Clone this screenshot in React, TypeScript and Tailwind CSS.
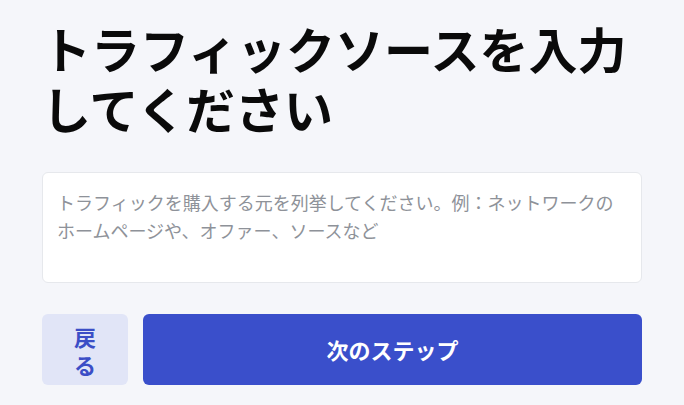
import React, { useState } from 'react';

export default function App() {
  const [source, setSource] = useState('');

  return (
    <div className="min-h-screen bg-[#f5f6fa] font-['Noto_Sans_CJK_JP','Noto_Sans',sans-serif]">
      <div className="mx-auto max-w-[600px] pt-[18px]">
        {/* Title */}
        <h1 className="text-[49px] font-bold leading-[60px] text-[#0a0a0a]">
          トラフィックソースを入力してください
        </h1>

        {/* Source input */}
        <textarea
          value={source}
          onChange={(e) => setSource(e.target.value)}
          placeholder="トラフィックを購入する元を列挙してください。例：ネットワークのホームページや、オファー、ソースなど"
          className="mt-[34px] block h-[111px] w-full resize-none rounded-md border border-[#e6e8ec] bg-white px-3.5 pt-[15px] text-lg leading-7 text-[#111827] placeholder:text-[#8e9299] focus:outline-none"
        />

        {/* Actions */}
        <div className="mt-[31px] flex gap-[15px]">
          <button className="h-[71px] w-[86px] shrink-0 rounded-md bg-[#e1e5f7] px-6 text-[22px] font-bold leading-7 text-[#3b4ec6]">
            戻る
          </button>
          <button className="h-[71px] flex-1 rounded-md bg-[#3a4fcb] text-[22px] font-bold text-white">
            次のステップ
          </button>
        </div>
      </div>
    </div>
  );
}
